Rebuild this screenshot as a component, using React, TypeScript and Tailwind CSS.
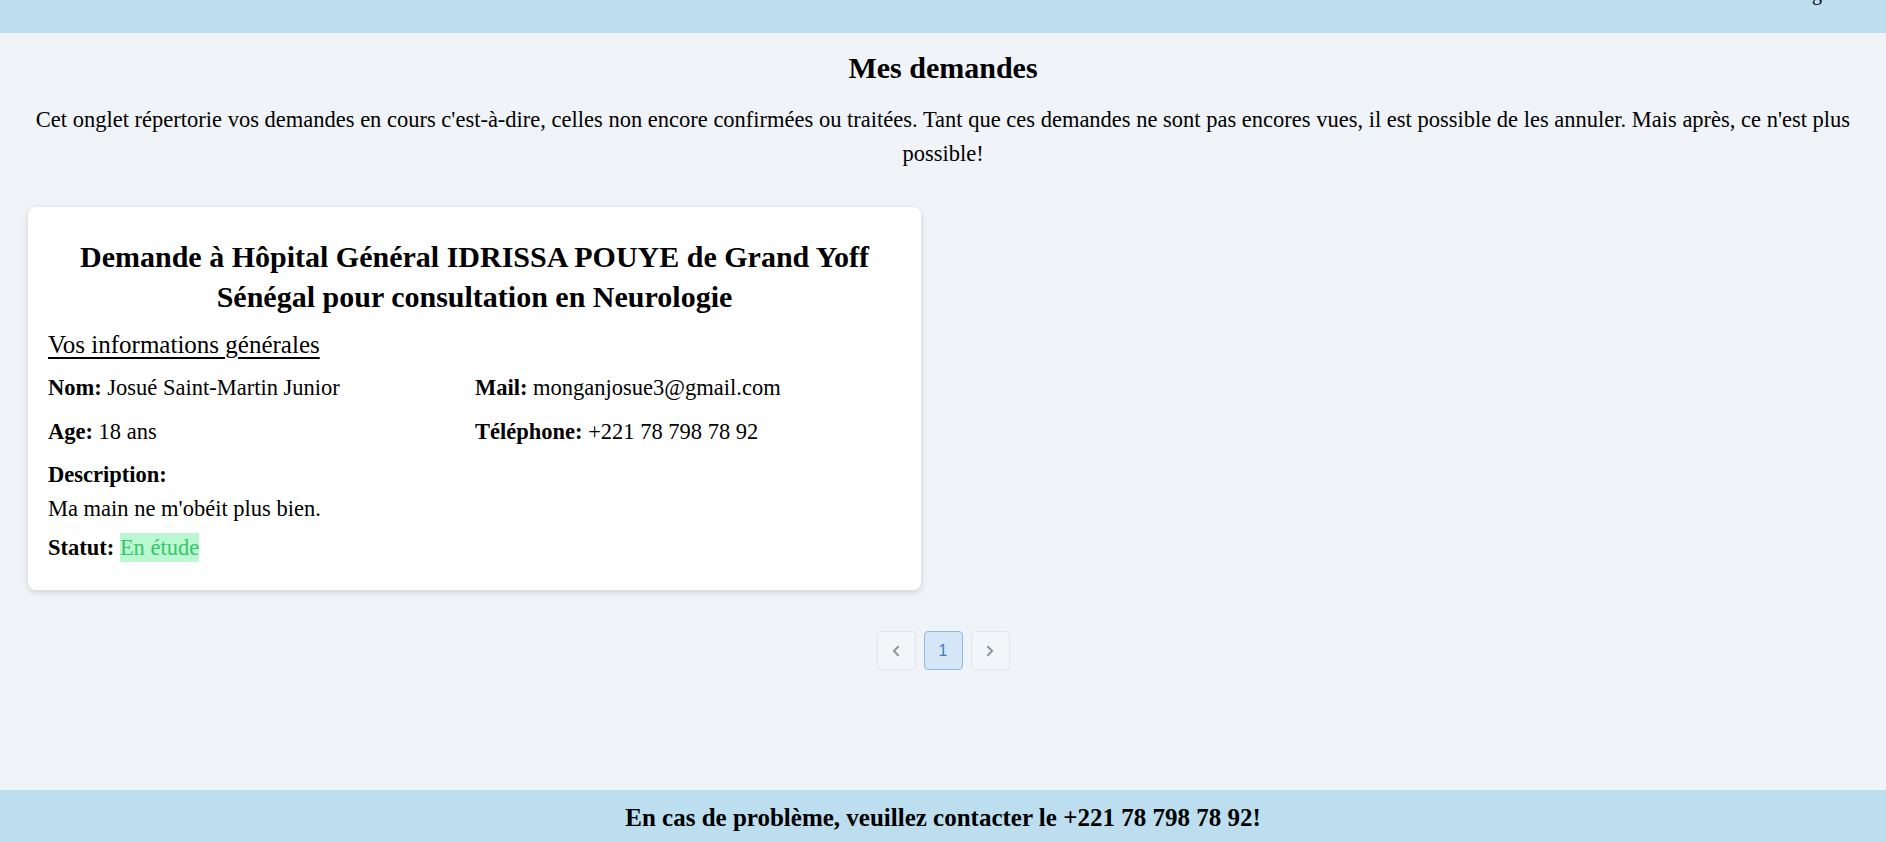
import React from "react";

const serif = "font-['Liberation_Serif','Times_New_Roman',serif]";

function Field({ label, value }: { label: string; value: string }) {
  return (
    <div className="text-[22.5px] leading-[30px]">
      <span className="font-bold">{label}</span> {value}
    </div>
  );
}

function Pagination() {
  return (
    <div className="flex justify-center gap-[8px] mt-[41px] font-['Liberation_Sans',Arial,sans-serif]">
      <button className="w-[39px] h-[39px] rounded-[4px] border border-[#e2e6ea] bg-[#f3f6f9] text-[#8f989f] flex items-center justify-center">
        <svg width="20" height="20" viewBox="0 0 24 24" fill="none" stroke="currentColor" strokeWidth="2.5" strokeLinecap="round" strokeLinejoin="round">
          <path d="M14.5 7l-5 5 5 5" />
        </svg>
      </button>
      <button className="w-[39px] h-[39px] rounded-[4px] border border-[#8dbbe3] bg-[#d5e6f6] text-[#3d7fc4] text-[16px] flex items-center justify-center">
        1
      </button>
      <button className="w-[39px] h-[39px] rounded-[4px] border border-[#e2e6ea] bg-[#f3f6f9] text-[#8f989f] flex items-center justify-center">
        <svg width="20" height="20" viewBox="0 0 24 24" fill="none" stroke="currentColor" strokeWidth="2.5" strokeLinecap="round" strokeLinejoin="round">
          <path d="M9.5 7l5 5-5 5" />
        </svg>
      </button>
    </div>
  );
}

export default function App() {
  return (
    <div className={`h-screen flex flex-col bg-[#f0f4f8] text-black ${serif}`}>
      {/* header, scrolled mostly out of view */}
      <header className="relative h-[33px] shrink-0 bg-[#bcdeef] overflow-hidden">
        <span className="absolute right-[64px] top-[-22px] text-[20px]">g</span>
      </header>

      <main className="flex-1 px-[34px]">
        <h2 className="mt-[17px] text-center text-[30px] leading-[36px] font-bold">Mes demandes</h2>
        <p className="mt-[17px] text-center text-[22.5px] leading-[34px]">
          Cet onglet répertorie vos demandes en cours c'est-à-dire, celles non encore confirmées ou traitées. Tant que ces demandes ne sont pas encores vues, il est possible de les annuler. Mais après, ce n'est plus possible!
        </p>

        <div className="mt-[36px] ml-[-6px] w-[893px] bg-white rounded-[8px] shadow-[0_2px_6px_rgba(0,0,0,0.15)] px-[20px] pt-[30px] pb-[27px]">
          <h3 className="text-center text-[30px] leading-[40px] font-bold px-[10px]">
            Demande à Hôpital Général IDRISSA POUYE de Grand Yoff Sénégal pour consultation en Neurologie
          </h3>
          <div className="mt-[13px] text-[25px] leading-[30px] underline underline-offset-[4px]">Vos informations générales</div>

          <div className="mt-[13px] grid grid-cols-[427px_1fr] gap-y-[14px]">
            <Field label="Nom:" value="Josué Saint-Martin Junior" />
            <Field label="Mail:" value="monganjosue3@gmail.com" />
            <Field label="Age:" value="18 ans" />
            <Field label="Téléphone:" value="+221 78 798 78 92" />
          </div>

          <div className="mt-[13px] text-[22.5px] leading-[30px] font-bold">Description:</div>
          <div className="mt-[4px] text-[22.5px] leading-[30px]">Ma main ne m'obéit plus bien.</div>

          <div className="mt-[9px] text-[22.5px] leading-[30px]">
            <span className="font-bold">Statut:</span>{" "}
            <span className="bg-[#bbf7d0] text-[#34c76a] py-[2px]">En étude</span>
          </div>
        </div>

        <Pagination />
      </main>

      <footer className="h-[52px] shrink-0 bg-[#bcdeef] flex items-center justify-center pt-[4px]">
        <span className="text-[25px] font-bold">En cas de problème, veuillez contacter le +221 78 798 78 92!</span>
      </footer>
    </div>
  );
}
